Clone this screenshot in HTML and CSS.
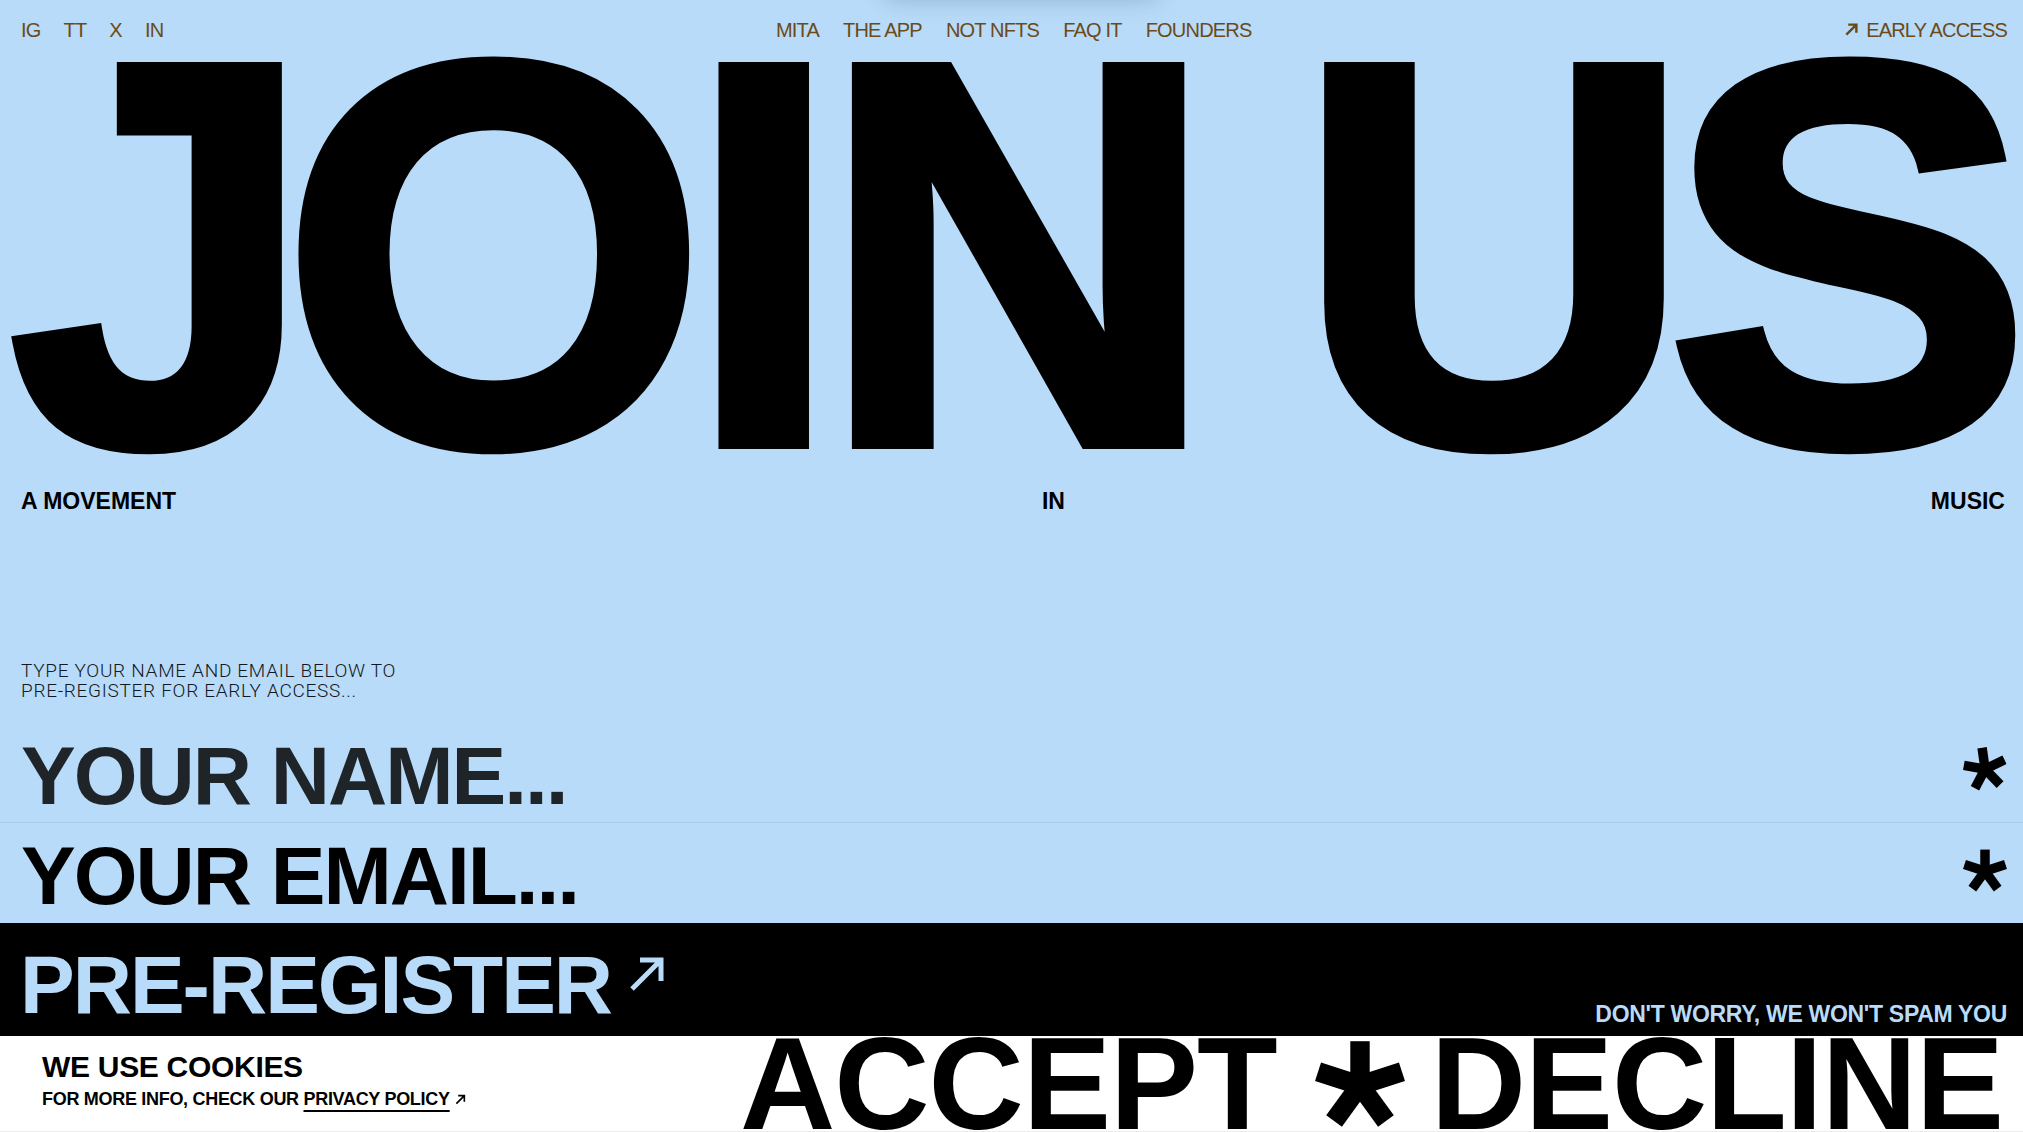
FILE: index.html
```html
<!DOCTYPE html>
<html lang="en">
<head>
<meta charset="utf-8">
<title>Join us</title>
<link rel="stylesheet" href="styles.css">
</head>
<body>
<div class="page">
  <div class="top-shadow"></div>
  <header class="nav">
    <nav class="nav-group social">
      <a href="#">IG</a><a href="#">TT</a><a href="#">X</a><a href="#">IN</a>
    </nav>
    <nav class="nav-group main">
      <a href="#">MITA</a><a href="#">THE APP</a><a href="#">NOT NFTS</a><a href="#">FAQ IT</a><a href="#">FOUNDERS</a>
    </nav>
    <a class="early" href="#">
      <svg class="early-arrow" viewBox="0 0 16 16" aria-hidden="true"><path d="M2.5 13.5 L13 3 M4.5 2.8 H13.2 V11.5" fill="none" stroke="currentColor" stroke-width="2.6"/></svg>
      EARLY ACCESS
    </a>
  </header>

  <h1 class="hero"><span class="kern-j">J</span><span class="kern-oin">OIN</span> <span class="kern-us">US</span></h1>

  <div class="tagline"><span>A MOVEMENT</span><span>IN</span><span>MUSIC</span></div>

  <p class="intro">TYPE YOUR NAME AND EMAIL BELOW TO<br>PRE-REGISTER FOR EARLY ACCESS...</p>

  <div class="field field-name">
    <span class="field-label">YOUR NAME...</span>
    <svg class="star star-tilt" viewBox="-51 -50 102 97" aria-hidden="true">
      <g fill="currentColor">
        <rect x="-11" y="-50" width="22" height="58"/>
        <rect x="-11" y="-50" width="22" height="58" transform="rotate(72)"/>
        <rect x="-11" y="-50" width="22" height="58" transform="rotate(144)"/>
        <rect x="-11" y="-50" width="22" height="58" transform="rotate(216)"/>
        <rect x="-11" y="-50" width="22" height="58" transform="rotate(288)"/>
      </g>
    </svg>
  </div>
  <div class="field field-email">
    <span class="field-label">YOUR EMAIL...</span>
    <svg class="star" viewBox="-51 -50 102 97" aria-hidden="true">
      <g fill="currentColor">
        <rect x="-11" y="-50" width="22" height="58"/>
        <rect x="-11" y="-50" width="22" height="58" transform="rotate(72)"/>
        <rect x="-11" y="-50" width="22" height="58" transform="rotate(144)"/>
        <rect x="-11" y="-50" width="22" height="58" transform="rotate(216)"/>
        <rect x="-11" y="-50" width="22" height="58" transform="rotate(288)"/>
      </g>
    </svg>
  </div>

  <div class="band">
    <a class="cta" href="#">PRE-REGISTER<svg class="cta-arrow" viewBox="0 0 36 36" aria-hidden="true"><path d="M3 33 L32 4 M11 4 H32 V25" fill="none" stroke="currentColor" stroke-width="5"/></svg></a>
    <span class="note">DON'T WORRY, WE WON'T SPAM YOU</span>
  </div>

  <div class="cookie">
    <div class="cookie-text">
      <div class="cookie-title">WE USE COOKIES</div>
      <div class="cookie-sub">FOR MORE INFO, CHECK OUR <a href="#" class="policy">PRIVACY POLICY</a><svg class="policy-arrow" viewBox="0 0 12 12" aria-hidden="true"><path d="M1.5 10.5 L10 2 M3.5 1.8 H10.2 V8.5" fill="none" stroke="currentColor" stroke-width="1.8"/></svg></div>
    </div>
    <div class="cookie-actions">
      <button class="choice">ACCEPT</button>
      <svg class="big-star" viewBox="-51 -50 102 97" aria-hidden="true">
        <g fill="currentColor">
          <rect x="-11" y="-50" width="22" height="58"/>
          <rect x="-11" y="-50" width="22" height="58" transform="rotate(72)"/>
          <rect x="-11" y="-50" width="22" height="58" transform="rotate(144)"/>
          <rect x="-11" y="-50" width="22" height="58" transform="rotate(216)"/>
          <rect x="-11" y="-50" width="22" height="58" transform="rotate(288)"/>
        </g>
      </svg>
      <button class="choice">DECLINE</button>
    </div>
  </div>
</div>
</body>
</html>
```

FILE: styles.css
```css
* { box-sizing: border-box; }

html, body {
  margin: 0;
  padding: 0;
  background: #b8dbf9;
}

body {
  width: 2023px;
  height: 1132px;
  overflow: hidden;
  font-family: "Liberation Sans", Arial, sans-serif;
  color: #000;
}

.page {
  position: relative;
  display: flex;
  flex-direction: column;
  height: 1132px;
}

a { color: inherit; text-decoration: none; }

.top-shadow {
  position: absolute;
  top: -40px;
  left: 880px;
  width: 283px;
  height: 40px;
  border-radius: 20px;
  box-shadow: 0 0 22px rgba(40, 80, 120, 0.28);
}

/* ---------- NAV ---------- */
.nav {
  display: flex;
  justify-content: space-between;
  align-items: center;
  padding: 20px 16px 0 21px;
  font-size: 20px;
  line-height: 20px;
  letter-spacing: -0.8px;
  color: #6b4a17;
}

.nav-group {
  display: flex;
}

.social { gap: 23px; }
.main { gap: 24px; margin-left: 20px; }

.early {
  display: flex;
  align-items: center;
  gap: 7px;
}

.early-arrow {
  width: 15px;
  height: 15px;
  margin-top: -1px;
}

/* ---------- HERO ---------- */
.hero {
  margin: 14px 0 0;
  padding-left: 10px;
  font-size: 545px;
  line-height: 400px;
  font-weight: 700;
  letter-spacing: -21px;
  word-spacing: -30px;
  white-space: nowrap;
  -webkit-text-stroke: 12px #000;
}

.kern-j {
  margin-right: -10px;
}

.kern-oin {
  letter-spacing: -18px;
}

.kern-us {
  letter-spacing: -24px;
}

.tagline {
  display: flex;
  justify-content: space-between;
  margin-top: 36px;
  padding: 0 18px 0 21px;
  font-size: 23px;
  line-height: 22px;
  font-weight: 700;
}

/* ---------- FORM ---------- */
.intro {
  margin: 149px 0 0;
  padding-left: 21px;
  font-family: Roboto, "Liberation Sans", sans-serif;
  font-weight: 300;
  font-size: 19px;
  line-height: 20px;
  letter-spacing: 0.7px;
  color: #121822;
}

.field {
  display: flex;
  justify-content: space-between;
  align-items: center;
  height: 100px;
  padding: 6px 16px 0 21px;
}

.field-name {
  margin-top: 22px;
  border-bottom: 1px solid rgba(60, 110, 160, 0.12);
  color: #1f2428;
}

.field-email {
  color: #000;
}

.field-label {
  font-size: 82px;
  line-height: 82px;
  font-weight: 700;
  letter-spacing: -2px;
}

.star {
  width: 44px;
  height: 43px;
  color: #000;
  margin-top: -12px;
}

.star-tilt {
  transform: rotate(-8deg);
  margin-top: -14px;
}

/* ---------- BAND ---------- */
.band {
  display: flex;
  justify-content: space-between;
  align-items: flex-start;
  height: 113px;
  padding: 21px 16px 0 20px;
  background: #000;
  color: #b8dbf9;
}

.cta {
  display: flex;
  align-items: flex-start;
  font-size: 82px;
  line-height: 82px;
  font-weight: 700;
  letter-spacing: -2px;
}

.cta-arrow {
  width: 36px;
  height: 36px;
  margin: 12px 0 0 18px;
}

.note {
  align-self: flex-end;
  margin-bottom: 10px;
  font-size: 23px;
  line-height: 23px;
  font-weight: 700;
  letter-spacing: -0.3px;
}

/* ---------- COOKIE ---------- */
.cookie {
  display: flex;
  justify-content: space-between;
  align-items: flex-start;
  height: 96px;
  padding: 0 20px 0 42px;
  background: #fff;
  border-bottom: 1px solid #ececec;
  overflow: hidden;
}

.cookie-text {
  padding-top: 16px;
}

.cookie-title {
  font-size: 30px;
  line-height: 29px;
  font-weight: 700;
  letter-spacing: -0.3px;
}

.cookie-sub {
  display: flex;
  align-items: baseline;
  margin-top: 8px;
  font-size: 18px;
  line-height: 20px;
  font-weight: 700;
  letter-spacing: -0.3px;
  white-space: pre;
}

.policy {
  text-decoration: underline;
  text-decoration-thickness: 2px;
  text-underline-offset: 5px;
}

.policy-arrow {
  width: 11px;
  height: 11px;
  margin-left: 5px;
}

.cookie-actions {
  display: flex;
  align-items: flex-start;
}

.choice {
  margin: 0;
  padding: 0;
  border: 0;
  background: none;
  color: #000;
  font-family: "Liberation Sans", Arial, sans-serif;
  font-size: 132px;
  line-height: 96px;
  font-weight: 700;
  letter-spacing: -1px;
  cursor: pointer;
}

.big-star {
  width: 90px;
  height: 86px;
  margin: 5px 26px 0 38px;
}
```
